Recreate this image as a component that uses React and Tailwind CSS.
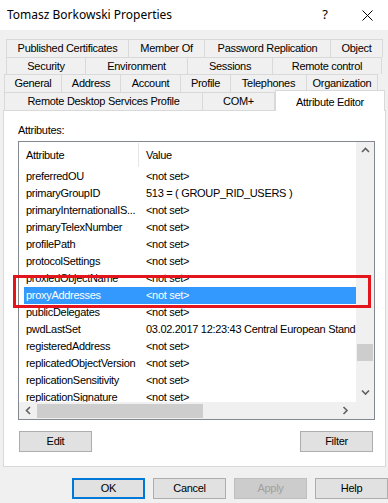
import React from "react";

const tabRows = [
    {ml: "ml-[6px]", h: "h-[18px]", tabs: [["Published Certificates", "w-[123px]"], ["Member Of", "w-[76px]"], ["Password Replication", "w-[126px]"], ["Object", "w-[52px]"]]},
    {ml: "ml-[6px]", h: "h-[17px]", tabs: [["Security", "w-[80px]"], ["Environment", "w-[102px]"], ["Sessions", "w-[85px]"], ["Remote control", "w-[109px]"]]},
    {ml: "ml-[4px]", h: "h-[18px]", tabs: [["General", "w-[58px]"], ["Address", "w-[59px]"], ["Account", "w-[60px]"], ["Profile", "w-[50px]"], ["Telephones", "w-[76px]"], ["Organization", "w-[71px]"]]},
];

const rows = [
    ["preferredOU", "<not set>"],
    ["primaryGroupID", "513 = ( GROUP_RID_USERS )"],
    ["primaryInternationalIS...", "<not set>"],
    ["primaryTelexNumber", "<not set>"],
    ["profilePath", "<not set>"],
    ["protocolSettings", "<not set>"],
    ["proxiedObjectName", "<not set>"],
    ["proxyAddresses", "<not set>", true],
    ["publicDelegates", "<not set>"],
    ["pwdLastSet", "03.02.2017 12:23:43 Central European Standard Time"],
    ["registeredAddress", "<not set>"],
    ["replicatedObjectVersion", "<not set>"],
    ["replicationSensitivity", "<not set>"],
    ["replicationSignature", "<not set>"],
];

const Chevron = ({dir}) => {
    const paths = {
        up: "M1 5 L4.5 1.5 L8 5",
        down: "M1 1.5 L4.5 5 L8 1.5",
        left: "M5 1 L1.5 4.5 L5 8",
        right: "M1.5 1 L5 4.5 L1.5 8",
    };
    const vertical = dir === "up" || dir === "down";
    return (
        <svg width={vertical ? 9 : 7} height={vertical ? 7 : 9} viewBox={vertical ? "0 0 9 7" : "0 0 7 9"}>
            <path d={paths[dir]} fill="none" stroke="#606060" strokeWidth="1.6"/>
        </svg>
    );
}

const Button = ({children, className = ""}) => (
    <div className={"h-[21px] w-[73px] flex items-center justify-center border " + className}>
        {children}
    </div>
);

export default function App() {
    return (
        <div className="relative w-[388px] h-[503px] overflow-hidden bg-[#f0f0f0] text-black text-[11px] tracking-[-0.3px] font-['Liberation_Sans',Arial,sans-serif]">
            {/* title bar */}
            <div className="h-[30px] bg-white flex items-center">
                <span className="pl-[7px] text-[12px] tracking-normal font-['Noto_Sans',sans-serif] flex-1">Tomasz Borkowski Properties</span>
                <span className="w-[14px] text-center text-[13px] tracking-normal font-['Noto_Sans',sans-serif] mr-[30px]">?</span>
                <svg width="11" height="11" viewBox="0 0 11 11" className="mr-[15px]">
                    <path d="M0.5 0.5 L10.5 10.5 M10.5 0.5 L0.5 10.5" stroke="#000" strokeWidth="1"/>
                </svg>
            </div>

            {/* tabs */}
            <div className="pt-[9px]">
                {tabRows.map((row, i) => (
                    <div key={i} className={"flex " + row.ml + " " + row.h}>
                        {row.tabs.map(([label, w], j) => (
                            <div key={label}
                                 className={"flex items-center justify-center border-t border-r border-[#d9d9d9] " + w + (j === 0 ? " border-l" : "")}>
                                {label}
                            </div>
                        ))}
                    </div>
                ))}
                <div className="flex items-end ml-[4px] h-[18px]">
                    <div className="w-[199px] h-[18px] flex items-center justify-center border-t border-l border-r border-[#d9d9d9]">Remote Desktop Services Profile</div>
                    <div className="w-[72px] h-[18px] flex items-center justify-center border-t border-r border-[#d9d9d9]">COM+</div>
                    <div className="relative z-10 w-[110px] h-[21px] -mb-[1px] flex items-start pt-[3px] justify-center bg-white border-t border-l border-r border-[#d9d9d9]">Attribute Editor</div>
                </div>
            </div>

            {/* page */}
            <div className="ml-[3px] w-[383px] h-[357px] bg-white border border-[#d9d9d9] pt-[13px]">
                <div className="ml-[14px] h-[13px] leading-[13px]">Attributes:</div>
                <div className="mt-[4px] ml-[14px] w-[357px] h-[279px] border border-[#828790] flex">
                    <div className="w-[337px] flex flex-col">
                        <div className="h-[26px] flex items-center">
                            <div className="w-[120px] h-[24px] pl-[7px] flex items-center border-r border-[#e5e5e5]">Attribute</div>
                            <div className="pl-[7px]">Value</div>
                        </div>
                        <div className="h-[234px] overflow-hidden">
                            {rows.map(([name, value, sel]) => (
                                <div key={name} className="h-[17px] pl-[5px] flex">
                                    <div className={"flex-1 flex items-center whitespace-nowrap overflow-hidden " + (sel ? "bg-[#3399ff] text-white" : "")}>
                                        <div className="w-[122px] shrink-0 pl-[2px]">{name}</div>
                                        <div>{value}</div>
                                    </div>
                                </div>
                            ))}
                        </div>
                        <div className="h-[17px] bg-[#f0f0f0] flex items-center">
                            <div className="w-[18px] flex justify-center"><Chevron dir="left"/></div>
                            <div className="w-[166px] h-[14px] bg-[#cdcdcd]"></div>
                            <div className="flex-1"></div>
                            <div className="w-[17px] flex justify-center mr-[2px]"><Chevron dir="right"/></div>
                        </div>
                    </div>
                    <div className="w-[18px] bg-[#f0f0f0] flex flex-col">
                        <div className="h-[17px] flex items-center justify-center"><Chevron dir="up"/></div>
                        <div className="h-[185px]"></div>
                        <div className="h-[17px] mx-[1px] bg-[#cdcdcd]"></div>
                        <div className="h-[23px]"></div>
                        <div className="h-[17px] flex items-center justify-center"><Chevron dir="down"/></div>
                    </div>
                </div>
                <div className="mt-[11px] flex justify-between pl-[15px] pr-[12px]">
                    <Button className="bg-[#e1e1e1] border-[#adadad]">Edit</Button>
                    <Button className="bg-[#e1e1e1] border-[#adadad] w-[72px]">Filter</Button>
                </div>
            </div>

            {/* dialog buttons */}
            <div className="mt-[11px] ml-[72px] flex gap-[8px]">
                <Button className="bg-[#e1e1e1] border-2 border-[#0078d7]">OK</Button>
                <Button className="bg-[#e1e1e1] border-[#adadad]">Cancel</Button>
                <Button className="bg-[#cccccc] border-[#bfbfbf] text-[#a0a0a0]">Apply</Button>
                <Button className="bg-[#e1e1e1] border-[#adadad] w-[66px]">Help</Button>
            </div>

            {/* annotation highlight */}
            <div className="absolute left-[13px] top-[275px] w-[358px] h-[33px] border-[3px] border-[#e3141b] z-20"></div>
        </div>
    );
}
